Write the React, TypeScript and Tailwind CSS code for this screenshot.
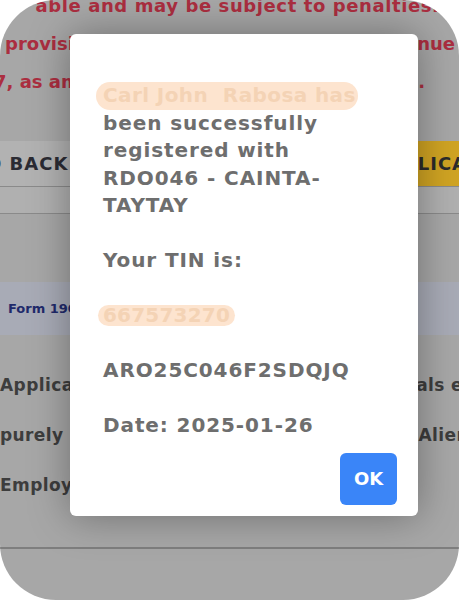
import React from 'react';

const font = { fontFamily: '"DejaVu Sans", "Liberation Sans", sans-serif' };

const SuccessModal: React.FC = () => {
  return (
    <div className="absolute left-[70px] top-[34px] w-[348px] h-[482px] bg-white rounded-[6px] shadow-[0_0_40px_rgba(0,0,0,0.35)] flex flex-col">
      <div className="pt-[48px] pl-[33px] pr-[6px] text-[20px] font-bold leading-[27.5px] text-[#6e6e6e] tracking-[0.9px] whitespace-nowrap">
        <p className="mb-[27.5px]">
          <span className="inline-block bg-[#fde4cf] rounded-full pl-[7px] pr-[2px] -ml-[7px] text-[#f4d3b5] tracking-[0.4px]">Carl John&nbsp; Rabosa has</span>
          <br />been successfully
          <br />registered with
          <br />RDO046 - CAINTA-
          <br />TAYTAY
        </p>
        <p className="mb-[27.5px]">Your TIN is:</p>
        <p className="mb-[27.5px]">
          <span className="inline-block bg-[#fde4cf] rounded-full px-[5px] -ml-[5px] text-[#f4d3b5] leading-[21px] tracking-[0.2px]">667573270</span>
        </p>
        <p className="mb-[27.5px]">ARO25C046F2SDQJQ</p>
        <p>Date: 2025-01-26</p>
      </div>
      <div className="flex justify-end pr-[21px] mt-[13px]">
        <button className="w-[57px] h-[52px] rounded-[6px] bg-[#3a85f8] text-white text-[18px] font-bold">OK</button>
      </div>
    </div>
  );
};

const App: React.FC = () => {
  return (
    <div className="w-[459px] h-[600px] bg-white overflow-hidden" style={font}>
      <div className="relative w-full h-full rounded-[56px] overflow-hidden bg-[#a7a7a7]">
        {/* dimmed page underneath */}
        <div className="text-[18px] font-bold leading-[38px] text-[#ab2e40] whitespace-nowrap -mt-[16px]">
          <div className="text-center -ml-[24px] -mr-[40px] pt-[3px] tracking-[0.6px]">able and may be subject to penalties.</div>
          <div className="flex justify-between pl-[5px] pr-[4px] overflow-hidden">
            <span>provisions of the</span>
            <span>Internal Revenue</span>
          </div>
          <div className="flex justify-between -ml-[6px] pr-[34px] overflow-hidden">
            <span>7, as amended</span>
            <span>act.</span>
          </div>
        </div>

        <div className="mt-[40px] flex justify-between h-[45px] overflow-hidden">
          <div className="bg-[#b2b2b2] flex items-center pr-[40px] -ml-[14px] text-[18px] font-semibold text-[#2b2b33] tracking-[1px] whitespace-nowrap">
            O BACK
          </div>
          <div className="bg-[#d0a423] flex items-center pl-[30px] -mr-[60px] text-[18px] font-semibold text-[#2b2b2b] tracking-[1px] whitespace-nowrap">
            APPLICATION
          </div>
        </div>
        <div className="h-[28px] bg-[#b0b0b0] border-t border-b border-[#8a8a8a]" />

        <div className="mt-[68px] h-[53px] bg-[#a8abb6] flex items-center pl-[8px] text-[13px] font-bold text-[#1f2a6b] whitespace-nowrap">
          Form 1902
        </div>

        <div className="mt-[25px] text-[17px] font-bold leading-[50px] text-[#3d3d3d] whitespace-nowrap tracking-[0.4px]">
          <div className="flex justify-between overflow-hidden -mr-[4px]">
            <span>Applicants</span>
            <span>als e</span>
          </div>
          <div className="flex justify-between overflow-hidden -mr-[10px]">
            <span>purely</span>
            <span>Alien</span>
          </div>
          <div className="flex justify-between overflow-hidden">
            <span>Employees</span>
            <span></span>
          </div>
        </div>

        <div className="mt-[37px] border-t-[2px] border-[#7e7e7e]" />

        <SuccessModal />
      </div>
    </div>
  );
};

export default App;
